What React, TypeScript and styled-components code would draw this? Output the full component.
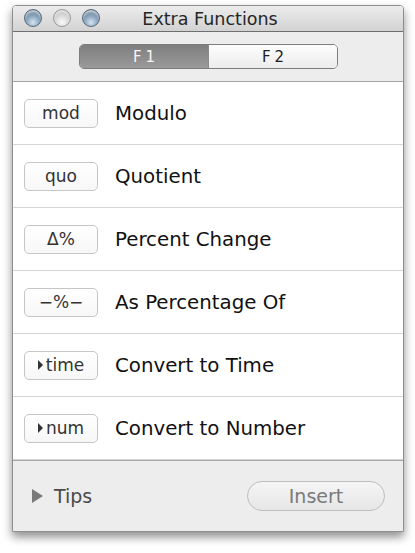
import * as React from 'react';
import styled, {createGlobalStyle} from 'styled-components';

const GlobalStyle = createGlobalStyle`
  html, body {
    margin: 0;
    padding: 0;
    background: #ffffff;
  }
  #root {
    width: 415px;
    height: 553px;
  }
`;

const Page = styled.div`
  width: 415px;
  height: 553px;
  box-sizing: border-box;
  padding: 5px 11px 0 12px;
  background: #ffffff;
  font-family: 'DejaVu Sans', 'Liberation Sans', sans-serif;
`;

const Window = styled.div`
  width: 392px;
  box-sizing: border-box;
  border: 1px solid #8e8e8e;
  border-radius: 4px 4px 0 0;
  box-shadow: 0 5px 10px rgba(0, 0, 0, 0.45);
  overflow: hidden;
  display: flex;
  flex-direction: column;
`;

const TitleBar = styled.div`
  height: 25px;
  position: relative;
  display: flex;
  align-items: center;
  justify-content: center;
  background: linear-gradient(#ececec, #d2d2d2);
  border-bottom: 1px solid #6f6f6f;
`;

const Lights = styled.div`
  position: absolute;
  left: 11px;
  top: 3px;
  display: flex;
  gap: 11px;
`;

const Light = styled.span<{$tone: 'blue' | 'gray'}>`
  width: 18px;
  height: 18px;
  border-radius: 50%;
  box-sizing: border-box;
  border: 1px solid ${({$tone}) => ($tone === 'blue' ? '#56687a' : '#9a9a9a')};
  background: ${({$tone}) =>
    $tone === 'blue'
      ? 'radial-gradient(circle at 50% 78%, #d4e4f2 0%, #8aa4bc 45%, #5f7890 100%)'
      : 'radial-gradient(circle at 50% 78%, #fafafa 0%, #d6d6d6 50%, #b0b0b0 100%)'};
  box-shadow: inset 0 2px 2px rgba(255, 255, 255, 0.6);
`;

const Title = styled.div`
  font-size: 17.5px;
  color: #262626;
  margin-left: 4px;
`;

const Toolbar = styled.div`
  height: 49px;
  display: flex;
  align-items: center;
  justify-content: center;
  background: #ededed;
  border-bottom: 1px solid #a5a5a5;
`;

const Segmented = styled.div`
  width: 259px;
  height: 25px;
  box-sizing: border-box;
  display: flex;
  border: 1px solid #7d7d7d;
  border-radius: 5px;
  overflow: hidden;
  margin-left: 1px;
`;

const Segment = styled.div<{$active?: boolean}>`
  flex: 1;
  display: flex;
  align-items: center;
  justify-content: center;
  font-size: 15px;
  letter-spacing: 4px;
  padding-left: 4px;
  color: ${({$active}) => ($active ? '#f6f6f6' : '#1e1e1e')};
  background: ${({$active}) =>
    $active ? 'linear-gradient(#7e7e7e, #9a9a9a)' : 'linear-gradient(#fdfdfd, #ececec)'};
  & + & {
    border-left: 1px solid #8a8a8a;
  }
`;

const List = styled.div`
  background: #ffffff;
  display: flex;
  flex-direction: column;
`;

const Row = styled.div`
  height: 62px;
  display: flex;
  align-items: center;
  gap: 17px;
  padding-left: 11px;
  border-bottom: 1px solid #d4d4d4;
`;

const FnButton = styled.div`
  width: 74px;
  height: 29px;
  box-sizing: border-box;
  border: 1px solid #c6c6c6;
  border-radius: 5px;
  display: flex;
  align-items: center;
  justify-content: center;
  gap: 3px;
  font-size: 17px;
  color: #333;
  background: linear-gradient(#ffffff, #f7f7f7);
`;

const Caret = styled.span`
  width: 0;
  height: 0;
  border-top: 5px solid transparent;
  border-bottom: 5px solid transparent;
  border-left: 5px solid #333;
`;

const Label = styled.div`
  font-size: 19.8px;
  color: #111;
`;

const Footer = styled.div`
  height: 71px;
  box-sizing: border-box;
  display: flex;
  align-items: center;
  justify-content: space-between;
  padding: 0 18px 0 19px;
  background: #ededed;
  border-top: 1px solid #a8a8a8;
`;

const Tips = styled.div`
  display: flex;
  align-items: center;
  gap: 11px;
  font-size: 19px;
  color: #4a4a4a;
`;

const TipsCaret = styled.span`
  width: 0;
  height: 0;
  border-top: 7px solid transparent;
  border-bottom: 7px solid transparent;
  border-left: 11px solid #7a7a7a;
`;

const InsertButton = styled.div`
  width: 138px;
  height: 30px;
  box-sizing: border-box;
  border: 1px solid #bdbdbd;
  border-radius: 15px;
  display: flex;
  align-items: center;
  justify-content: center;
  font-size: 19px;
  color: #7a7a7a;
  background: linear-gradient(#f5f5f5, #e6e6e6);
`;

const rows: {key: string; caret?: boolean; label: string}[] = [
  {key: 'mod', label: 'Modulo'},
  {key: 'quo', label: 'Quotient'},
  {key: 'Δ%', label: 'Percent Change'},
  {key: '−%−', label: 'As Percentage Of'},
  {key: 'time', caret: true, label: 'Convert to Time'},
  {key: 'num', caret: true, label: 'Convert to Number'}
];

export default function App() {
  return (
    <Page>
      <GlobalStyle />
      <Window>
        <TitleBar>
          <Lights>
            <Light $tone="blue" />
            <Light $tone="gray" />
            <Light $tone="blue" />
          </Lights>
          <Title>Extra Functions</Title>
        </TitleBar>
        <Toolbar>
          <Segmented>
            <Segment $active>F1</Segment>
            <Segment>F2</Segment>
          </Segmented>
        </Toolbar>
        <List>
          {rows.map(r => (
            <Row key={r.key}>
              <FnButton>
                {r.caret && <Caret />}
                {r.key}
              </FnButton>
              <Label>{r.label}</Label>
            </Row>
          ))}
        </List>
        <Footer>
          <Tips>
            <TipsCaret />
            Tips
          </Tips>
          <InsertButton>Insert</InsertButton>
        </Footer>
      </Window>
    </Page>
  );
}
